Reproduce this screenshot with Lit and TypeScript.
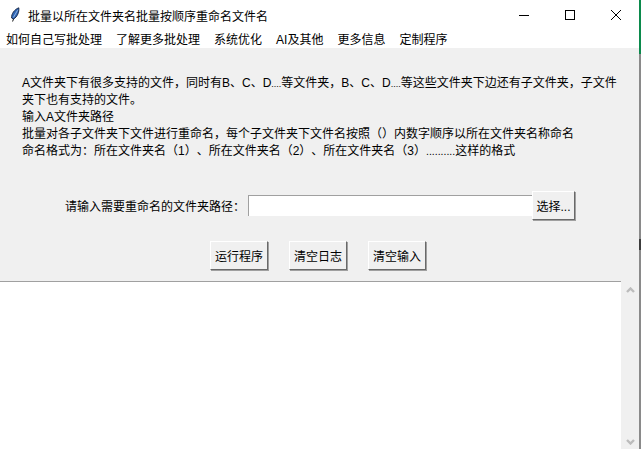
import { LitElement, html, css } from 'lit'
import { customElement } from 'lit/decorators.js'

const MENUS = ['如何自己写批处理', '了解更多批处理', '系统优化', 'AI及其他', '更多信息', '定制程序']
const ACTIONS = ['运行程序', '清空日志', '清空输入']

@customElement('app-root')
export class AppRoot extends LitElement {
  static styles = css`
    :host {
      display: flex;
      width: 641px;
      height: 449px;
      overflow: hidden;
      background: #fff;
      color: #000;
      font-family: 'Liberation Sans', 'Noto Sans CJK SC', sans-serif;
      font-size: 12px;
      text-spacing-trim: space-all;
    }
    .window {
      flex: 1;
      min-width: 0;
      display: flex;
      flex-direction: column;
    }
    /* sliver of the window behind this one */
    .edge {
      flex: none;
      width: 2px;
      background: linear-gradient(
        #0b8a4c 0 54px,
        #8a8a8a 54px 239px,
        #3c3c3c 239px 250px,
        #8a8a8a 250px
      );
    }
    .titlebar {
      display: flex;
      align-items: center;
      height: 30px;
      flex: none;
    }
    .feather { margin-left: 9px; width: 12px; height: 16px; }
    .title { margin-left: 7px; flex: 1; }
    .win {
      width: 46px;
      height: 30px;
      display: grid;
      place-items: center;
    }
    .menubar {
      display: flex;
      align-items: center;
      gap: 14px;
      height: 18px;
      padding: 0 0 2px 6px;
      box-sizing: border-box;
      flex: none;
    }
    .panel {
      flex: none;
      height: 233px;
      background: #f0f0f0;
      box-sizing: border-box;
      padding-top: 27px;
      display: flex;
      flex-direction: column;
    }
    .intro {
      margin: 0 17px 0 22px;
      line-height: 17px;
      height: 85px;
      white-space: nowrap;
    }
    .dots { font-size: 9px; line-height: 0; }
    .dots-long { font-size: 10.5px; line-height: 0; }
    .path {
      display: flex;
      align-items: center;
      margin-top: 31px;
      padding-left: 65px;
    }
    .path label { width: 183px; }
    .path input {
      width: 284px;
      height: 21px;
      box-sizing: border-box;
      border: none;
      border-top: 1px solid #a0a0a0;
      border-left: 1px solid #a0a0a0;
      background: #fff;
      outline: none;
      padding: 0;
    }
    button {
      font: inherit;
      color: #000;
      background: #f0f0f0;
      border: 1px solid;
      border-color: #fff #696969 #696969 #fff;
      box-shadow: 1px 1px 0 #a0a0a0;
      padding: 0;
      box-sizing: border-box;
      height: 29px;
    }
    .pick { width: 43px; }
    .actions {
      display: flex;
      gap: 21px;
      margin-top: 21px;
      padding-left: 210px;
    }
    .actions button { width: 58px; }
    .log {
      flex: 1;
      display: flex;
      min-height: 0;
    }
    .log-body {
      flex: 1;
      border-top: 1px solid #a0a0a0;
    }
    .scroll {
      width: 18px;
      background: #f0f0f0;
      display: flex;
      flex-direction: column;
      justify-content: space-between;
      align-items: center;
      padding: 6px 0 4px;
      box-sizing: border-box;
    }
  `

  render() {
    return html`
      <div class="window">
        <div class="titlebar">
          <svg class="feather" viewBox="0 0 12 16">
            <path d="M3.6 14.5L5 10.5" stroke="#111" stroke-width="1" fill="none" />
            <path d="M2.6 11C2.2 7 5.4 2.4 9.8 0.8C10.4 5 8.2 10 4.6 12Z" fill="#2f66b5" stroke="#14233f" stroke-width=".9" />
            <path d="M4.4 10.5L8.6 3.2" stroke="#a9c6ec" stroke-width=".8" fill="none" />
          </svg>
          <span class="title">批量以所在文件夹名批量按顺序重命名文件名</span>
          <span class="win">
            <svg width="10" height="10"><path d="M0 5.5H10" stroke="#000" /></svg>
          </span>
          <span class="win">
            <svg width="10" height="10"><rect x=".5" y=".5" width="9" height="9" fill="none" stroke="#000" /></svg>
          </span>
          <span class="win">
            <svg width="10" height="10"><path d="M0 0L10 10M10 0L0 10" stroke="#000" /></svg>
          </span>
        </div>
        <div class="menubar">${MENUS.map((m) => html`<span>${m}</span>`)}</div>
        <div class="panel">
          <div class="intro">
            <div>A文件夹下有很多支持的文件，同时有B、C、D<span class="dots">....</span>等文件夹，B、C、D<span class="dots">....</span>等这些文件夹下边还有子文件夹，子文件</div>
            <div>夹下也有支持的文件。</div>
            <div>输入A文件夹路径</div>
            <div>批量对各子文件夹下文件进行重命名，每个子文件夹下文件名按照（）内数字顺序以所在文件夹名称命名</div>
            <div>命名格式为：所在文件夹名（1）、所在文件夹名（2）、所在文件夹名（3）<span class="dots-long">..........</span>这样的格式</div>
          </div>
          <div class="path">
            <label>请输入需要重命名的文件夹路径：</label>
            <input type="text" />
            <button class="pick">选择...</button>
          </div>
          <div class="actions">${ACTIONS.map((a) => html`<button>${a}</button>`)}</div>
        </div>
        <div class="log">
          <div class="log-body"></div>
          <div class="scroll">
            <svg width="9" height="6"><path d="M1 5L4.5 1.5L8 5" fill="none" stroke="#bcbcbc" stroke-width="2.4" /></svg>
            <svg width="9" height="6"><path d="M1 1L4.5 4.5L8 1" fill="none" stroke="#bcbcbc" stroke-width="2.4" /></svg>
          </div>
        </div>
      </div>
      <div class="edge"></div>
    `
  }
}
